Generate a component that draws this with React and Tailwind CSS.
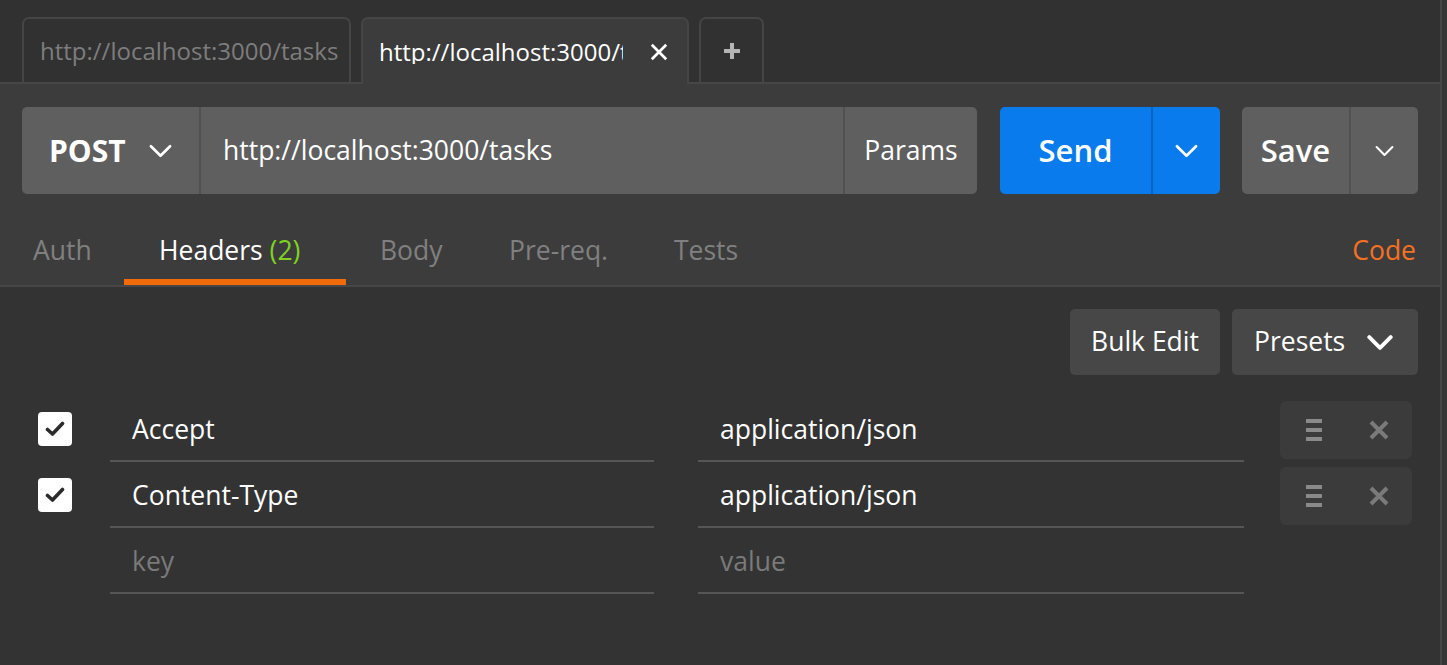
import React from "react";

const font = { fontFamily: '"Open Sans", "Noto Sans", sans-serif' };

function Chevron({ className, sw = 2.6 }) {
  return (
    <svg viewBox="0 0 24 14" className={className} fill="none" stroke="currentColor" strokeWidth={sw} strokeLinecap="round" strokeLinejoin="round">
      <path d="M2 2 L12 12 L22 2" />
    </svg>
  );
}

function XIcon({ className, sw = 3 }) {
  return (
    <svg viewBox="0 0 20 20" className={className} fill="none" stroke="currentColor" strokeWidth={sw} strokeLinecap="butt">
      <path d="M2 2 L18 18 M18 2 L2 18" />
    </svg>
  );
}

function Check() {
  return (
    <div className="w-[34px] h-[34px] rounded-[4px] bg-white flex items-center justify-center">
      <svg viewBox="0 0 20 16" className="w-[20px] h-[16px]" fill="none" stroke="#2b2b2b" strokeWidth="3.6" strokeLinecap="round" strokeLinejoin="round">
        <path d="M2.5 8.5 L7.5 13 L17.5 2.5" />
      </svg>
    </div>
  );
}

function Actions() {
  return (
    <div className="mt-[5px] h-[58px] w-[132px] rounded-[6px] bg-[#3b3b3b] flex items-center">
      <div className="ml-[26px] w-[16px] flex flex-col gap-[5px]">
        <div className="h-[4px] bg-[#8a8a8a]" />
        <div className="h-[4px] bg-[#8a8a8a]" />
        <div className="h-[4px] bg-[#8a8a8a]" />
      </div>
      <XIcon className="ml-[47px] w-[20px] h-[20px] text-[#7a7a7a]" sw={4} />
    </div>
  );
}

function Row({ k, v, checked, placeholder }) {
  return (
    <div className="h-[66px] flex">
      <div className="w-[110px] pl-[38px] flex items-center">{checked && <Check />}</div>
      <div className={"w-[544px] border-b-2 border-[#565656] pl-[22px] pt-[4px] flex items-center text-[26.5px] " + (placeholder ? "text-[#7a7a7a]" : "text-white")}>
        {k}
      </div>
      <div className="w-[44px]" />
      <div className={"w-[546px] border-b-2 border-[#565656] pl-[22px] pt-[4px] flex items-center text-[26.5px] " + (placeholder ? "text-[#7a7a7a]" : "text-white")}>
        {v}
      </div>
      <div className="w-[36px]" />
      {checked && <Actions />}
    </div>
  );
}

export default function App() {
  const tabs = [
    { t: "Auth", cls: "w-[124px] pl-[33px]" },
    { t: "Headers", cls: "w-[222px] pl-[35px]" },
    { t: "Body", cls: "w-[129px] pl-[34px]" },
    { t: "Pre-req.", cls: "w-[164px] pl-[34px]" },
    { t: "Tests", cls: "w-[140px] pl-[35px]" },
  ];
  return (
    <div className="w-[1447px] h-[665px] flex bg-[#333333] overflow-hidden" style={font}>
      <div className="w-[1440px] flex flex-col">
        {/* Top tab strip */}
        <div className="h-[84px] bg-[#313131] border-b-2 border-[#474747] flex items-end pl-[22px] gap-[10px]">
          <div className="h-[65px] w-[329px] rounded-t-[7px] border-2 border-b-0 border-[#454545] bg-[#313131] flex items-center pl-[16px] text-[24px] text-[#7d7d7d] leading-none whitespace-nowrap">
            http://localhost:3000/tasks
          </div>
          <div className="h-[67px] -mb-[2px] w-[328px] rounded-t-[7px] border-2 border-b-0 border-[#454545] bg-[#3c3c3c] flex items-center pl-[16px] relative">
            <div className="w-[244px] overflow-hidden whitespace-nowrap text-[24px] text-white leading-none">http://localhost:3000/tasks</div>
            <XIcon className="ml-[27px] w-[18px] h-[18px] text-white" sw={3} />
          </div>
          <div className="h-[65px] w-[65px] rounded-t-[7px] border-2 border-b-0 border-[#454545] bg-[#313131] flex items-center justify-center">
            <svg viewBox="0 0 16 16" className="w-[16px] h-[16px]" fill="none" stroke="#b5b5b5" strokeWidth="4">
              <path d="M8 0 V16 M0 8 H16" />
            </svg>
          </div>
        </div>

        {/* Request area */}
        <div className="bg-[#3c3c3c] border-b-2 border-[#474747]">
          <div className="mt-[23px] mx-[22px] h-[87px] flex">
            <div className="w-[955px] h-full rounded-[5px] bg-[#5f5f5f] flex overflow-hidden">
              <div className="w-[179px] border-r-2 border-[#515151] flex items-center pl-[27px] text-white">
                <span className="text-[30px] font-bold leading-none">POST</span>
                <Chevron className="ml-[23px] w-[23px] h-[14px]" sw={2.8} />
              </div>
              <div className="flex-1 flex items-center pl-[22px] text-[26.5px] text-white">http://localhost:3000/tasks</div>
              <div className="w-[134px] border-l-2 border-[#515151] flex items-center justify-center text-[26.5px] text-white">Params</div>
            </div>
            <div className="ml-[23px] w-[220px] h-full rounded-[5px] bg-[#097bed] flex text-white">
              <div className="w-[153px] border-r-2 border-[#0a63bf] flex items-center justify-center text-[31px] font-semibold">Send</div>
              <div className="flex-1 flex items-center justify-center">
                <Chevron className="w-[23px] h-[14px]" sw={2.8} />
              </div>
            </div>
            <div className="ml-[22px] w-[176px] h-full rounded-[5px] bg-[#5f5f5f] flex text-white">
              <div className="w-[109px] border-r-2 border-[#515151] flex items-center justify-center text-[31px] font-semibold">Save</div>
              <div className="flex-1 flex items-center justify-center">
                <Chevron className="w-[19px] h-[12px]" sw={2.6} />
              </div>
            </div>
          </div>
          <div className="h-[91px] flex">
            {tabs.map((tb, i) => (
              <div key={tb.t} className={"flex flex-col justify-end " + tb.cls}>
                <div className={"leading-[34px] mb-[12px] text-[26.5px] whitespace-nowrap " + (i === 1 ? "text-white" : "text-[#808080]")}>
                  {tb.t}
                  {i === 1 && <span className="text-[#7ed321]"> (2)</span>}
                </div>
                <div className={"h-[6px] " + (i === 1 ? "bg-[#f26b0a] -ml-[35px]" : "")} />
              </div>
            ))}
            <div className="flex-1" />
            <div className="flex flex-col justify-end pr-[24px]">
              <div className="leading-[34px] mb-[18px] text-[26.5px] text-[#f47023]">Code</div>
            </div>
          </div>
        </div>

        {/* Headers body */}
        <div className="flex-1 bg-[#333333]">
          <div className="mt-[22px] pr-[22px] flex justify-end gap-[12px]">
            <div className="w-[150px] h-[66px] rounded-[5px] bg-[#474747] flex items-center justify-center text-[26.5px] text-white">Bulk Edit</div>
            <div className="w-[186px] h-[66px] rounded-[5px] bg-[#474747] flex items-center pl-[22px] text-[26.5px] text-white">
              Presets
              <Chevron className="ml-[22px] w-[26px] h-[15px]" sw={3.6} />
            </div>
          </div>
          <div className="mt-[21px]">
            <Row k="Accept" v="application/json" checked />
            <Row k="Content-Type" v="application/json" checked />
            <Row k="key" v="value" placeholder />
          </div>
        </div>
      </div>
      <div className="w-[2px] bg-[#474747]" />
      <div className="flex-1 bg-[#363636]" />
    </div>
  );
}
